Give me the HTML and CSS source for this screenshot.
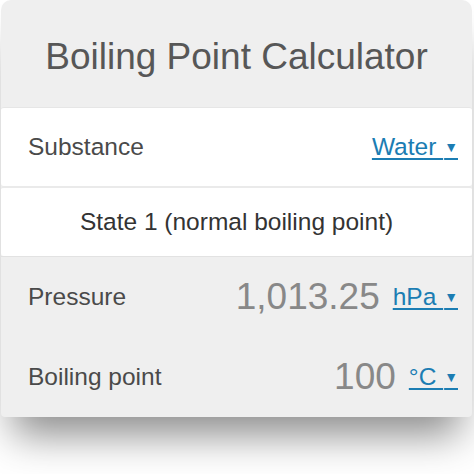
FILE: index.html
```html
<!DOCTYPE html>
<html lang="en">
<head>
    <meta charset="UTF-8">
    <meta name="viewport" content="width=device-width, initial-scale=1.0">
    <title>Boiling Point Calculator</title>
    <link rel="stylesheet" href="styles.css">
</head>
<body>
    <div class="calculator">
        <h1 class="calc-title">Boiling Point Calculator</h1>

        <div class="row row-white">
            <span class="label">Substance</span>
            <a href="#" class="unit">Water <span class="caret">&#9660;</span></a>
        </div>

        <div class="row row-white row-heading">
            State 1 (normal boiling point)
        </div>

        <div class="group">
            <div class="row">
                <span class="label">Pressure</span>
                <span class="value">1,013.25</span>
                <a href="#" class="unit">hPa <span class="caret">&#9660;</span></a>
            </div>
            <div class="row">
                <span class="label">Boiling point</span>
                <span class="value">100</span>
                <a href="#" class="unit">&deg;C <span class="caret">&#9660;</span></a>
            </div>
        </div>
    </div>
</body>
</html>
```

FILE: styles.css
```css
html, body {
    margin: 0;
    background: #fff;
}
body {
    min-height: 474px;
    padding-bottom: 56px;
    box-sizing: border-box;
    font-family: "Liberation Sans", Arial, sans-serif;
}
.calculator {
    width: 471px;
    margin-left: 1px;
    background: #efefef;
    border-radius: 10px 10px 4px 4px;
    box-shadow: 0 30px 38px -12px rgba(0,0,0,0.45);
}
.calc-title {
    margin: 0;
    height: 107px;
    line-height: 114px;
    text-align: center;
    font-size: 37px;
    font-weight: normal;
    color: #575757;
}
.row {
    display: flex;
    align-items: center;
    padding: 0 14px 0 27px;
    font-size: 24.5px;
}
.row-white {
    background: #fff;
    height: 78px;
    border-top: 1px solid #e6e6e6;
    border-radius: 3px;
}
.row-white + .row-white {
    height: 68px;
    border-top: 2px solid #eaeaea;
}
.row-heading {
    justify-content: center;
    padding: 0;
    color: #333;
}
.label {
    flex: 1;
    color: #4a4a4a;
}
.group {
    border-top: 1px solid #e2e2e2;
}
.group .row {
    height: 79px;
}
.group .row + .row {
    height: 81px;
}
.value {
    font-size: 37px;
    color: #888;
    margin-right: 13px;
}
.unit {
    color: #1b7db3;
    text-decoration: underline;
    text-underline-offset: 3px;
}
.caret {
    font-size: 14px;
    vertical-align: 3px;
    margin-left: 1px;
}
```
